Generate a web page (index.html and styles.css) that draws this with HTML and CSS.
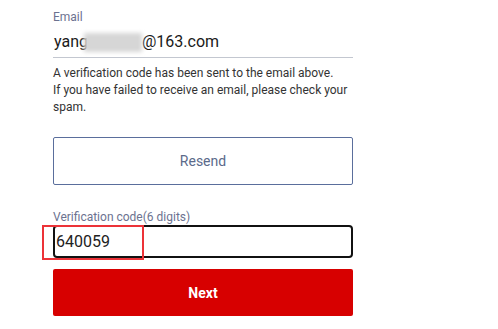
FILE: index.html
```html
<!DOCTYPE html>
<html>
<head>
<meta charset="utf-8">
<link rel="stylesheet" href="styles.css">
</head>
<body>
<div class="form">
  <div class="field-label email-label">Email</div>
  <div class="email-value"><span class="masked">yang<span class="blur"></span></span><span class="gap"></span>@163.com</div>
  <p class="note">A verification code has been sent to the email above.<br>If you have failed to receive an email, please check your spam.</p>
  <button class="resend">Resend</button>
  <div class="field-label code-label">Verification code(6 digits)</div>
  <div class="code-wrap">
    <div class="code-input">640059</div>
    <div class="highlight"></div>
  </div>
  <button class="next">Next</button>
</div>
</body>
</html>
```

FILE: styles.css
```css
* { box-sizing: border-box; }
html, body { margin: 0; padding: 0; background: #fff; }
body { font-family: Roboto, "Liberation Sans", sans-serif; }
.form {
  width: 300px;
  margin-left: 53px;
  padding-top: 9px;
  display: flex;
  flex-direction: column;
}
.field-label {
  font-size: 12px;
  line-height: 16px;
  color: #6c7290;
}
.email-value {
  margin-top: 7px;
  font-size: 16px;
  line-height: 20px;
  color: #1a1a1a;
  padding-left: 1px;
  padding-bottom: 5px;
  border-bottom: 1px solid #c3c7d0;
  display: flex;
}
.masked { position: relative; }
.blur {
  position: absolute;
  left: 30px;
  top: 1px;
  width: 58px;
  height: 19px;
  background: #d6d6d6;
  filter: blur(2px);
}
.gap { width: 54px; }
.note {
  margin: 7px 0 0 0;
  font-size: 12px;
  line-height: 17px;
  color: #333;
}
.resend {
  margin-top: 21px;
  height: 48px;
  border: 1px solid #5a6e9c;
  border-radius: 2px;
  background: #fff;
  font-family: inherit;
  font-size: 14px;
  color: #5b6a8a;
}
.code-label { margin-top: 24px; }
.code-wrap { position: relative; margin-top: 0; }
.code-input {
  height: 33px;
  border: 2px solid #111;
  border-radius: 4px;
  padding-left: 1px;
  font-size: 16px;
  line-height: 29px;
  color: #222;
}
.highlight {
  position: absolute;
  left: -11px;
  top: 0;
  width: 102px;
  height: 35px;
  border: 2px solid #ec3338;
}
.next {
  margin-top: 11px;
  height: 47px;
  border: none;
  border-radius: 2px;
  background: #d70000;
  color: #fff;
  font-family: inherit;
  font-size: 14px;
  font-weight: bold;
}
```
